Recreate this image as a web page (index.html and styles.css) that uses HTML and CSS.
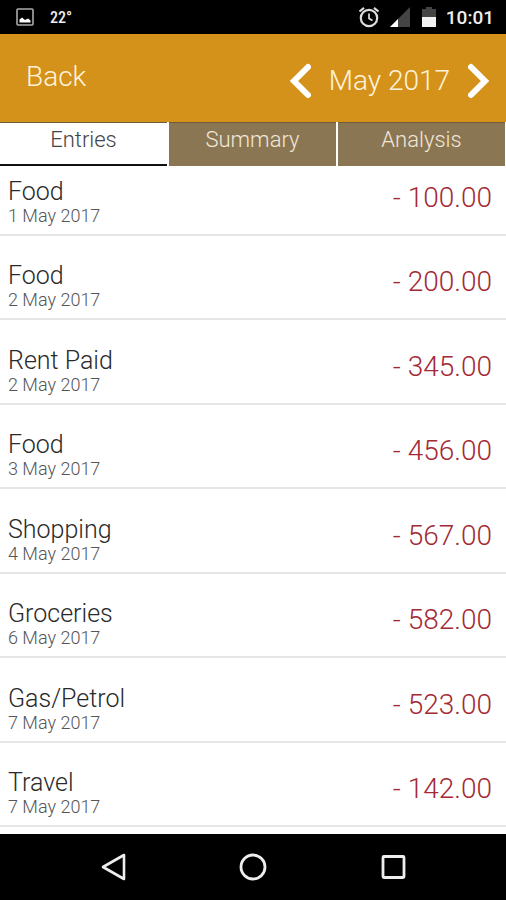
FILE: index.html
```html
<!DOCTYPE html>
<html lang="en">
<head>
<meta charset="utf-8">
<meta name="viewport" content="width=device-width, initial-scale=1">
<title>May 2017</title>
<link rel="stylesheet" href="styles.css">
</head>

<body>
<!-- status bar -->
<div class="status">
  <svg class="pic" width="18" height="18" viewBox="0 0 18 18"><rect x="1" y="1" width="16" height="16" rx="1" fill="none" stroke="#aaa" stroke-width="1.6"/><path d="M3.500 14.500v-3l2.500-2 3 2.500 3-1.500 2.500 2v2z" fill="#fff"/></svg>
  <span class="temp">22°</span>
  <svg class="alarm" width="22" height="22" viewBox="0 0 22 22" fill="none" stroke="#ddd"><circle cx="11" cy="12" r="8.200" stroke-width="2.200"/><path d="M1.500 5.500l4.500-3.700M20.500 5.500l-4.500-3.700" stroke-width="2.200"/><path d="M11 7.500v5l3.500 2" stroke-width="1.700"/></svg>
  <svg class="signal" width="20" height="20" viewBox="0 0 20 20"><path d="M20 0v20H0z" fill="#444"/><path d="M8 12v8H0z" fill="#fff"/></svg>
  <svg class="battery" width="14" height="20" viewBox="0 0 14 20"><path d="M0 2h4V0h6v2h4v8H0z" fill="#444"/><path d="M0 10h14v10H0z" fill="#f2f2f2"/></svg>
  <span class="clock">10:01</span>
</div>

<div class="header">
  <button type="button" class="back">Back</button>
  <div class="month">
    <button type="button" aria-label="Previous month"><svg width="22" height="36" viewBox="0 0 22 36"><path d="M19 4L5 18l14 14" fill="none" stroke="#fff" stroke-width="6" stroke-linecap="round"/></svg></button>
    <span>May 2017</span>
    <button type="button" aria-label="Next month"><svg width="22" height="36" viewBox="0 0 22 36"><path d="M3 4l14 14L3 32" fill="none" stroke="#fff" stroke-width="6" stroke-linecap="round"/></svg></button>
  </div>
</div>

<div class="tabs">
  <button type="button" class="current">Entries</button>
  <button type="button">Summary</button>
  <button type="button">Analysis</button>
</div>

<ul class="list">
  <li><div><h2>Food</h2><p>1 May 2017</p></div><span>- 100.00</span></li>
  <li><div><h2>Food</h2><p>2 May 2017</p></div><span>- 200.00</span></li>
  <li><div><h2>Rent Paid</h2><p>2 May 2017</p></div><span>- 345.00</span></li>
  <li><div><h2>Food</h2><p>3 May 2017</p></div><span>- 456.00</span></li>
  <li><div><h2>Shopping</h2><p>4 May 2017</p></div><span>- 567.00</span></li>
  <li><div><h2>Groceries</h2><p>6 May 2017</p></div><span>- 582.00</span></li>
  <li><div><h2>Gas/Petrol</h2><p>7 May 2017</p></div><span>- 523.00</span></li>
  <li><div><h2>Travel</h2><p>7 May 2017</p></div><span>- 142.00</span></li>
</ul>

<!-- android buttons -->
<div class="nav">
  <button type="button" aria-label="Back"><svg width="28" height="28" viewBox="0 0 28 28"><path d="M25 2v24L4 14z" fill="none" stroke="#eee" stroke-width="2.600" stroke-linejoin="round"/></svg></button>
  <button type="button" aria-label="Home"><svg width="28" height="28" viewBox="0 0 28 28"><circle cx="14" cy="14" r="12" fill="none" stroke="#eee" stroke-width="2.800"/></svg></button>
  <button type="button" aria-label="Recent apps"><svg width="28" height="28" viewBox="0 0 28 28"><rect x="4" y="3.500" width="21" height="21" rx="1" fill="none" stroke="#eee" stroke-width="2.800"/></svg></button>
</div>
</body>
</html>
```

FILE: styles.css
```css
*{ padding:0; margin:0; list-style:none; border:0; box-sizing:border-box;}
body{ min-height:100vh; display:flex; flex-direction:column; background:#fff; font-family:Roboto,"Liberation Sans",sans-serif; font-weight:300;}
button{ background:none; font:inherit; color:inherit; cursor:pointer;}
svg{ display:block;}

.status{ height:34px; padding:0 12px 0 16px; background:#000; color:#eee; display:flex; align-items:center;}
.status .temp{ margin-left:16px; font:500 16px "Roboto Condensed",Roboto,sans-serif;}
.status .alarm{ margin-left:auto;}
.status .signal{ margin-left:10px;}
.status .battery{ margin-left:12px;}
.status .clock{ margin-left:10px; font-size:19px; font-weight:500;}

.header{ height:88px; padding:0 16px 0 26px; background:#d5921b; color:#fff3dc; display:flex; align-items:center; justify-content:space-between;}
.header .back{ font-size:28px; line-height:32px; padding-bottom:2px;}
.month{ display:flex; align-items:center; gap:18px; padding-top:6px; font-size:28px; line-height:34px;}

.tabs{ height:44px; display:flex; gap:2px; padding-right:1px;}
.tabs button{ flex:1; padding-bottom:10px; background:#8b7653; border-top:1px solid #6f5b35; color:#f1e7d7; font-size:22px; line-height:28px;}
.tabs .current{ background:#fff; color:#444; border-bottom:2px solid #111; padding-bottom:8px;}

.list{ flex:1; display:flex; flex-direction:column; padding-bottom:7px;}
.list li{ flex:1; min-height:70px; padding:0 14px 7px 8px; border-bottom:2px solid #e6e6e6; display:flex; justify-content:space-between; align-items:flex-end;}
.list li:first-child{ flex:none;}
.list h2{ font-size:25px; line-height:26px; font-weight:300; color:#2a2a2a;}
.list p{ font-size:18px; line-height:22px; color:#555;}
.list span{ font-size:28px; line-height:34px; padding-bottom:12px; color:#a32a35;}

.nav{ height:66px; background:#000; display:flex; justify-content:center; gap:112px;}
```
